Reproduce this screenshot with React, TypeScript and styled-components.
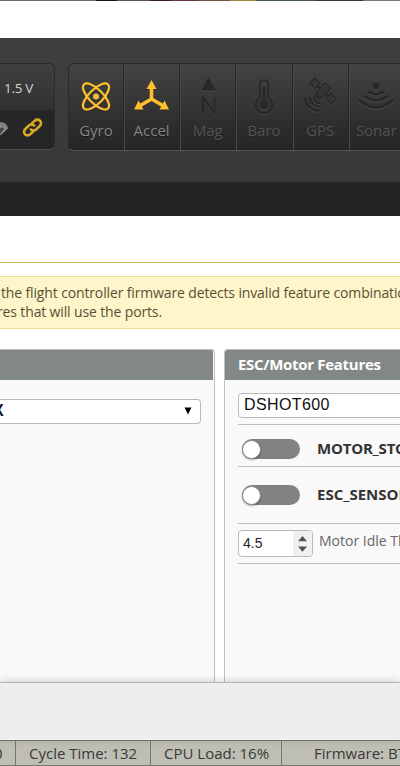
import React from "react";
import styled, { createGlobalStyle } from "styled-components";

const GlobalStyle = createGlobalStyle`
  * { box-sizing: border-box; }
  html, body { margin: 0; padding: 0; background: #fff; overflow: hidden; }
  body { font-family: "Open Sans", "Noto Sans", sans-serif; }
`;

const Window = styled.div`
  width: 400px;
  height: 766px;
  display: flex;
  flex-direction: column;
  overflow: hidden;
  background: #fff;
`;

const DesktopEdge = styled.div`
  height: 1px;
  flex: none;
  background: linear-gradient(
    90deg,
    #666 0 96px, #151515 96px 117px, #555 117px 150px, #3b1c22 150px 171px,
    #70343b 171px 198px, #6b5547 198px 230px, #9a8b45 230px 256px,
    #46555a 256px 315px, #40333f 315px 363px, #777 363px
  );
`;

const TitleBar = styled.div`
  height: 37px;
  flex: none;
`;

const Header = styled.header`
  height: 144px;
  flex: none;
  display: flex;
  align-items: flex-start;
  gap: 13px;
  padding-top: 25px;
  background: linear-gradient(#3d403f, #363938);
`;

const BatteryBox = styled.div`
  width: 55px;
  height: 87px;
  flex: none;
  overflow: hidden;
  border: 1px solid #2a2b2b;
  border-left: 0;
  border-bottom-color: #4c4f4e;
  border-radius: 0 6px 6px 0;
  background: #262626;
`;

const Voltage = styled.div`
  height: 46px;
  padding: 15px 0 0 4px;
  font-size: 13.5px;
  line-height: 18px;
  letter-spacing: -0.3px;
  white-space: nowrap;
  color: #d2d2d2;
  background: linear-gradient(#404040, #303030);
`;

const StatusIcons = styled.div`
  height: 35px;
  display: flex;
  align-items: center;
  gap: 14px;

  svg { display: block; flex: none; }
`;

const SensorBox = styled.div`
  width: 395px;
  height: 88px;
  flex: none;
  display: flex;
  overflow: hidden;
  border: 1px solid #292a2a;
  border-bottom-color: #505352;
  border-radius: 6px;
  background: linear-gradient(#434343, #252525);
`;

const SensorCell = styled.div<{ $on?: boolean }>`
  width: 56.2px;
  flex: none;
  display: flex;
  flex-direction: column;
  align-items: center;
  border-right: 1px solid #252525;
  box-shadow: 1px 0 0 #494949;
  color: ${(p) => (p.$on ? "#858585" : "#535353")};
  font-size: 15px;
  line-height: 20px;
  text-shadow: 0 1px ${(p) => (p.$on ? "#191919" : "#222")};

  &:first-child { width: 55px; }

  svg {
    display: block;
    flex: none;
    margin: 13px 0 5px;
    color: ${(p) => (p.$on ? "#fcc02d" : "#272727")};
    filter: drop-shadow(0 1px 0 ${(p) => (p.$on ? "#2226" : "#484848")});
  }
`;

const TabStrip = styled.div`
  height: 34px;
  flex: none;
  background: #242424;
`;

const Content = styled.main`
  height: 466px;
  flex: none;
  display: flex;
  flex-direction: column;
  overflow: hidden;
`;

const TitleRule = styled.div`
  height: 47px;
  flex: none;
  border-bottom: 1px solid #c9c05c;
`;

const Note = styled.div`
  height: 53px;
  flex: none;
  margin-top: 13px;
  padding: 6px 0 0 1px;
  border: solid #eadf8c;
  border-width: 1px 0;
  background: #fff5cb;
  color: #575133;
  font-size: 14px;
  line-height: 19px;
  white-space: nowrap;
`;

const NoteLine = styled.div<{ $shift?: number }>`
  margin-left: ${(p) => p.$shift ?? 0}px;
  letter-spacing: -0.14px;
`;

const Panels = styled.div`
  flex: 1;
  display: flex;
  gap: 9px;
  margin-top: 20px;
`;

const Panel = styled.section<{ $width: number; $side: "left" | "right" }>`
  width: ${(p) => p.$width}px;
  flex: none;
  border: 1px solid #bfbfbf;
  border-width: ${(p) => (p.$side === "left" ? "1px 1px 0 0" : "1px 0 0 1px")};
  border-radius: ${(p) => (p.$side === "left" ? "0 4px 0 0" : "4px 0 0 0")};
  background: #f9f9f9;
  overflow: hidden;
`;

const PanelTitle = styled.h2<{ $inset?: number }>`
  height: 30px;
  margin: 0 ${(p) => p.$inset ?? 0}px 0 0;
  padding-left: 13px;
  background: #828885;
  color: #fff;
  font-size: 15px;
  font-weight: 700;
  line-height: 29px;
  letter-spacing: -0.3px;
  white-space: nowrap;
`;

const PanelBody = styled.div<{ $top: number; $left: number }>`
  padding: ${(p) => p.$top}px 0 0 ${(p) => p.$left}px;
`;

const Select = styled.div<{ $side: "left" | "right" }>`
  width: ${(p) => (p.$side === "left" ? 201 : 180)}px;
  height: 25px;
  display: flex;
  align-items: center;
  justify-content: space-between;
  padding: ${(p) => (p.$side === "left" ? "0 8px 1px 0" : "0 0 2px 5px")};
  border: 1px solid #b9b9b9;
  border-left-width: ${(p) => (p.$side === "left" ? 0 : 1)}px;
  border-radius: ${(p) => (p.$side === "left" ? "0 4px 4px 0" : "4px 0 0 4px")};
  background: #fff;
  color: #111;
  font-family: "Liberation Sans", Arial, sans-serif;
  font-size: 16px;
  letter-spacing: 0.4px;
  line-height: 20px;
`;

const MixerValue = styled.span`
  margin-left: -7px;
  font-weight: 700;
`;

const FeatureRow = styled.div<{ $height: number; $drop?: number }>`
  height: ${(p) => p.$height}px;
  display: flex;
  align-items: center;
  gap: 17px;
  padding: ${(p) => p.$drop ?? 0}px 0 0 4px;
  border-bottom: 1px solid #bebebe;
  color: #333;
  font-size: 15px;
  font-weight: 700;
  white-space: nowrap;
`;

const FeatureName = styled.span<{ $track: number }>`
  letter-spacing: ${(p) => p.$track}px;
  padding-bottom: 2px;
`;

const SelectRow = styled.div`
  height: 32px;
  border-bottom: 1px solid #bebebe;
`;

const Toggle = styled.span`
  width: 58px;
  height: 20px;
  flex: none;
  display: flex;
  align-items: center;
  border-radius: 10px;
  background: #828282;
`;

const Knob = styled.span`
  width: 19px;
  height: 19px;
  border: 1px solid #888;
  border-radius: 50%;
  background: #fff;
  box-shadow: 0 1px 2px #0005;
`;

const IdleRow = styled.div`
  height: 40px;
  display: flex;
  align-items: flex-start;
  gap: 6px;
  padding-top: 6px;
  border-bottom: 1px solid #bebebe;
  color: #686868;
  font-size: 14px;
  line-height: 21px;
  white-space: nowrap;
`;

const NumberInput = styled.span`
  width: 75px;
  height: 27px;
  flex: none;
  display: flex;
  justify-content: space-between;
  overflow: hidden;
  padding-left: 4px;
  border: 1px solid #b9b9b9;
  border-radius: 4px;
  background: #fff;
  color: #222;
  font-family: "Liberation Sans", Arial, sans-serif;
  font-size: 14px;
  line-height: 25px;
`;

const Spinner = styled.span`
  width: 19px;
  display: flex;
  align-items: center;
  justify-content: center;
  background: #f0f0f0;
`;

const Toolbar = styled.div`
  height: 58px;
  flex: none;
  position: relative;
  border-top: 1px solid #b4b4b4;
  background: #eee;
  box-shadow: 0 -1px 8px rgba(0, 0, 0, 0.16);
`;

const StatusBar = styled.footer`
  height: 26px;
  flex: none;
  display: flex;
  border: solid #77776f;
  border-width: 1px 0;
  background: #bfbeb4;
  color: #383838;
  font-size: 15px;
  line-height: 25px;
  white-space: nowrap;
`;

const StatusItem = styled.span<{ $width: number; $pad: number; $last?: boolean }>`
  width: ${(p) => p.$width}px;
  flex: none;
  padding-left: ${(p) => Math.max(p.$pad, 0)}px;
  text-indent: ${(p) => Math.min(p.$pad, 0)}px;
  border-right: ${(p) => (p.$last ? 0 : 1)}px solid #777770;
`;

const GyroIcon = () => (
  <svg width="38" height="38" viewBox="0 0 38 38" fill="none" stroke="currentColor" strokeWidth="2.3">
    <ellipse cx="19" cy="19.5" rx="17" ry="7" transform="rotate(45 19 19.5)" />
    <ellipse cx="19" cy="19.5" rx="17" ry="7" transform="rotate(-45 19 19.5)" />
    <circle cx="19" cy="19.5" r="3" fill="currentColor" stroke="none" />
  </svg>
);

const AccelIcon = () => (
  <svg width="38" height="38" viewBox="0 0 38 38" fill="currentColor">
    <path d="M18.5 7v16M18.5 22l-12 7M18.5 22l12 7" fill="none" stroke="currentColor" strokeWidth="3.6" />
    <path d="M18.5 3l5 9h-10zM1 32.5l4.5-9 5 9zM36 32.5l-4.5-9-5 9z" />
  </svg>
);

const MagIcon = () => (
  <svg width="38" height="38" viewBox="0 0 38 38" fill="none" stroke="currentColor">
    <path d="M19.5 0l7.3 13.5H12.2z" fill="currentColor" stroke="none" />
    <path d="M14 36.5V21L25.5 36V20" strokeWidth="2.2" />
  </svg>
);

const BaroIcon = () => (
  <svg width="38" height="38" viewBox="0 0 38 38" fill="none" stroke="currentColor" strokeWidth="2">
    <path d="M14.8 21V7.5a4.2 4.2 0 0 1 8.4 0V21a8.2 8.2 0 1 1-8.4 0z" />
    <path d="M19 10v13" strokeWidth="2.6" />
    <circle cx="19" cy="28" r="4.7" fill="currentColor" stroke="none" />
  </svg>
);

const GpsIcon = () => (
  <svg width="38" height="38" viewBox="0 0 38 38" fill="none" stroke="currentColor" strokeWidth="2.2">
    <g transform="rotate(43 23 13)" fill="currentColor" fillOpacity="0.45" strokeWidth="1.3">
      <path d="M8 11h8v7H8zM19 7h8v14h-8zM30 11h8v7h-8z" />
      <path d="M16 14.5h3M27 14.5h3M20 24q3-3 6 0" strokeWidth="2" />
    </g>
    <path d="M13 20a5.5 5.5 0 0 0 6 6M8.5 20a10 10 0 0 0 9.5 9.5M4 20.5a14 14 0 0 0 14 13.5" />
  </svg>
);

const SonarIcon = () => (
  <svg width="38" height="38" viewBox="0 0 38 38" fill="none" stroke="currentColor" strokeWidth="2.6">
    <circle cx="19" cy="9" r="3.2" fill="currentColor" stroke="none" />
    <path d="M11.5 14.5q7.5 6 15 0M6.5 18.5q12.5 10 25 0M1.8 23q17.2 15 34.4 0" />
  </svg>
);

const ParachuteIcon = () => (
  <svg width="8" height="20" viewBox="0 0 8 20">
    <path d="M0 4q7 0 8 6.5L1 17H0z" fill="#858585" />
    <path d="M0 11q2-3 4 0L0 16" fill="#414141" />
  </svg>
);

const LinkIcon = () => (
  <svg width="21" height="21" viewBox="0 0 24 24" fill="none" strokeLinecap="round">
    <g stroke="#dda827" strokeWidth="2.9">
      <path d="M10 14.2a4.3 4.3 0 0 0 6.3 0l4.2-4.2a4 4 0 0 0-5.8-5.8l-3 2.7" />
      <path d="M14 9.8a4.3 4.3 0 0 0-6.3 0L3.5 14a4 4 0 0 0 5.8 5.8l3-2.7" />
    </g>
  </svg>
);

const sensors = [
  { label: "Gyro", icon: <GyroIcon />, on: true },
  { label: "Accel", icon: <AccelIcon />, on: true },
  { label: "Mag", icon: <MagIcon /> },
  { label: "Baro", icon: <BaroIcon /> },
  { label: "GPS", icon: <GpsIcon /> },
  { label: "Sonar", icon: <SonarIcon /> },
];

export default function App() {
  return (
    <>
      <GlobalStyle />
      <Window>
        <DesktopEdge />
        <TitleBar />
        <Header>
          <BatteryBox>
            <Voltage>1.5 V</Voltage>
            <StatusIcons>
              <ParachuteIcon />
              <LinkIcon />
            </StatusIcons>
          </BatteryBox>
          <SensorBox>
            {sensors.map((s) => (
              <SensorCell key={s.label} $on={s.on}>
                {s.icon}
                {s.label}
              </SensorCell>
            ))}
          </SensorBox>
        </Header>
        <TabStrip />
        <Content>
          <TitleRule />
          <Note>
            <NoteLine>the flight controller firmware detects invalid feature combinations</NoteLine>
            <NoteLine $shift={-4}>res that will use the ports.</NoteLine>
          </Note>
          <Panels>
            <Panel $width={215} $side="left">
              <PanelTitle $inset={1} />
              <PanelBody $top={19} $left={0}>
                <Select $side="left">
                  <MixerValue>X</MixerValue>
                  <svg width="8" height="8" viewBox="0 0 8 8">
                    <path d="M0.5 .5h7L4 7.5z" />
                  </svg>
                </Select>
              </PanelBody>
            </Panel>
            <Panel $width={177} $side="right">
              <PanelTitle>ESC/Motor Features</PanelTitle>
              <PanelBody $top={13} $left={13}>
                <SelectRow>
                  <Select $side="right">DSHOT600</Select>
                </SelectRow>
                <FeatureRow $height={42} $drop={7}>
                  <Toggle><Knob /></Toggle>
                  <FeatureName $track={-0.2}>MOTOR_STOP</FeatureName>
                </FeatureRow>
                <FeatureRow $height={57}>
                  <Toggle><Knob /></Toggle>
                  <FeatureName $track={0}>ESC_SENSOR</FeatureName>
                </FeatureRow>
                <IdleRow>
                  <NumberInput>
                    4.5
                    <Spinner>
                      <svg width="9" height="16" viewBox="0 0 9 16" fill="#505050">
                        <path d="M4.5 0L9 5.3H0zM0 10.5h9L4.5 15.8z" />
                      </svg>
                    </Spinner>
                  </NumberInput>
                  Motor Idle Throttle
                </IdleRow>
              </PanelBody>
            </Panel>
          </Panels>
        </Content>
        <Toolbar />
        <StatusBar>
          <StatusItem $width={16} $pad={-6}>0</StatusItem>
          <StatusItem $width={135} $pad={13}>Cycle Time: 132</StatusItem>
          <StatusItem $width={131} $pad={13}>CPU Load: 16%</StatusItem>
          <StatusItem $width={118} $pad={32} $last>Firmware: BTFL</StatusItem>
        </StatusBar>
      </Window>
    </>
  );
}
